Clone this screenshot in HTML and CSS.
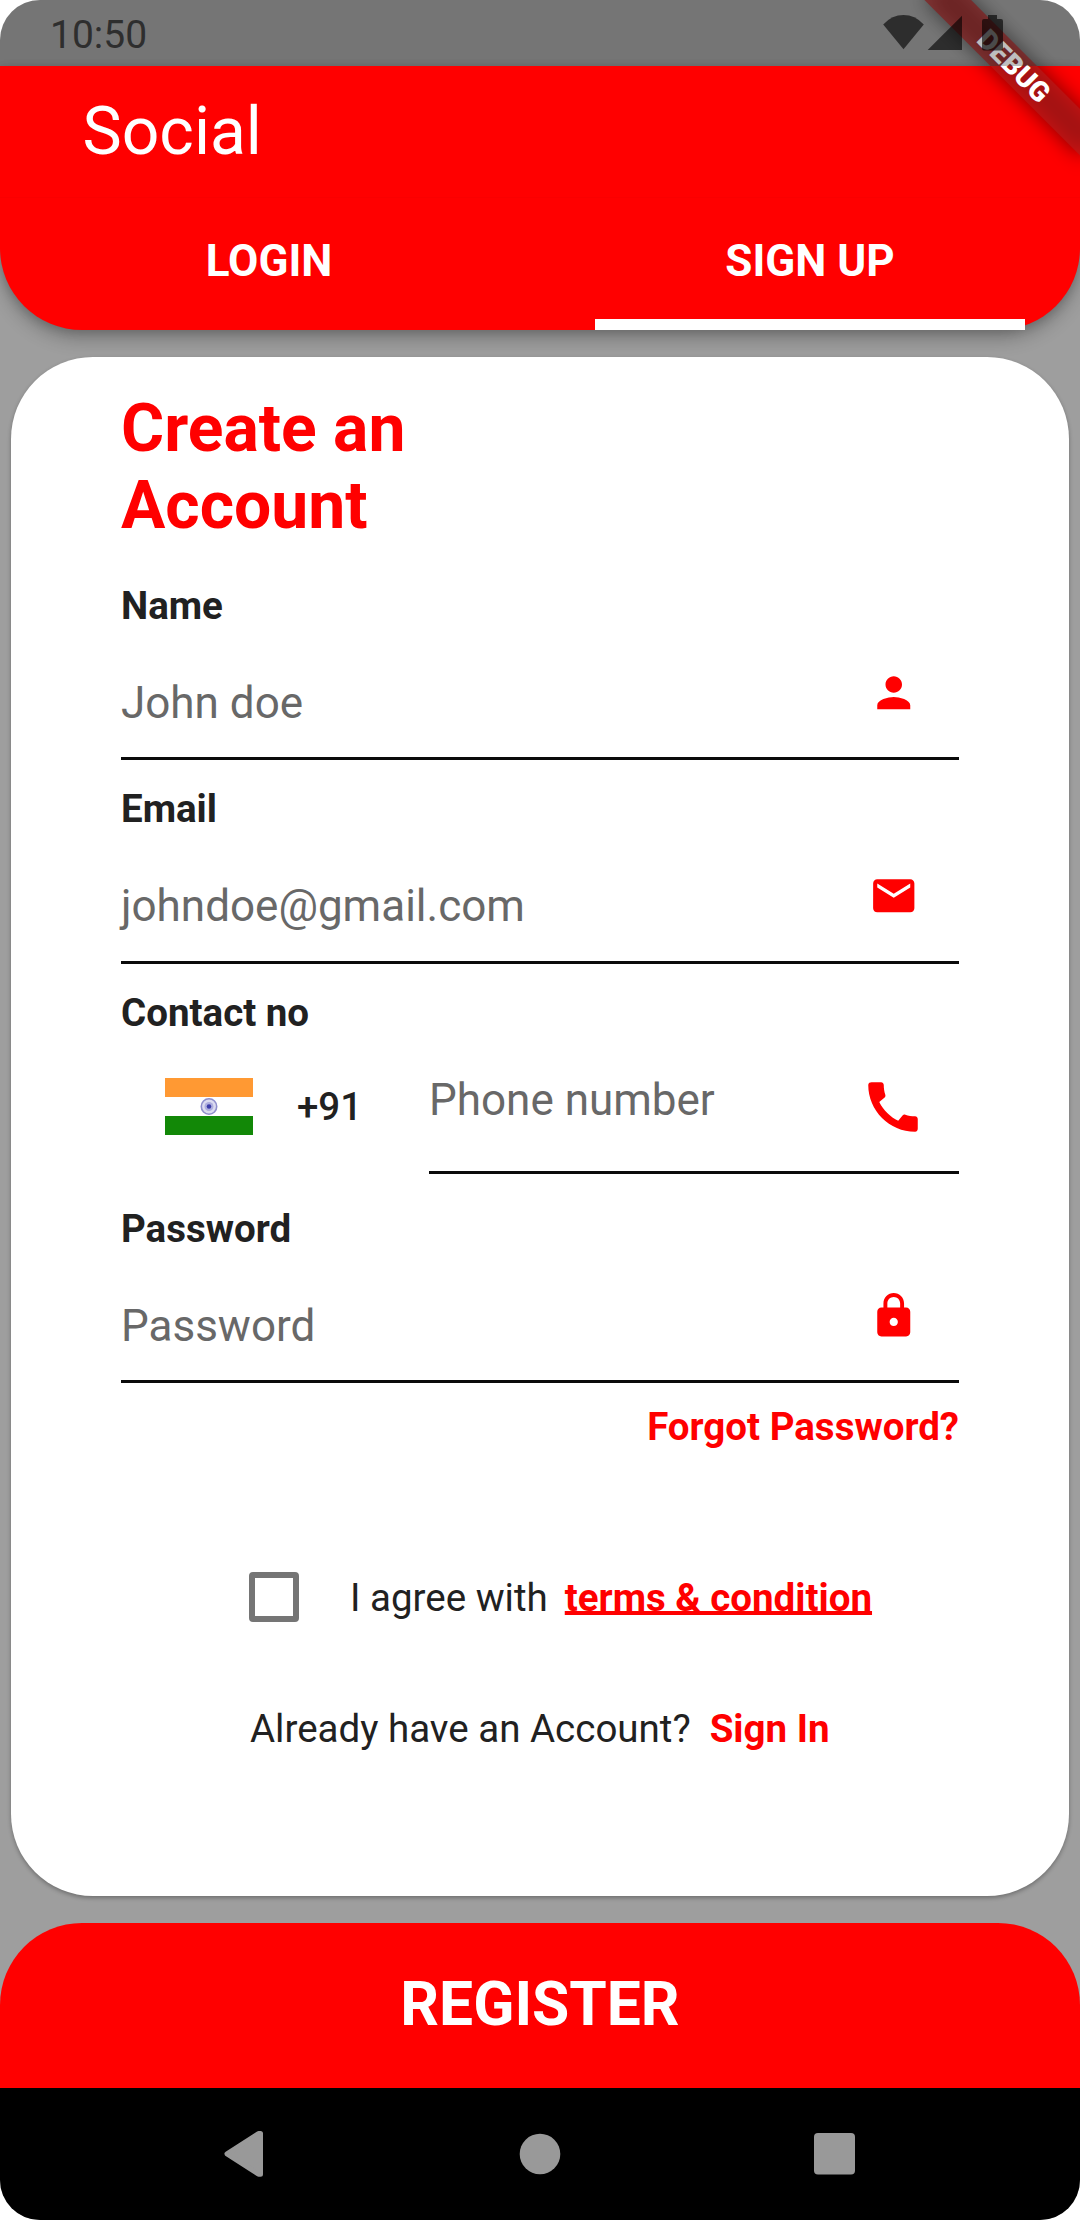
FILE: index.html
```html
<!DOCTYPE html>
<html lang="en">
<head>
<meta charset="utf-8">
<title>Social</title>
<link rel="stylesheet" href="styles.css">
</head>
<body>
<div class="screen">
  <div class="status-bar">
    <span class="clock">10:50</span>
    <svg class="status-icons" width="122" height="38" viewBox="882 14 122 38">
      <path d="M903.5 49.3 883.2 24.4Q892 15 903.5 15T923.8 24.4Z"/>
      <path d="M962 15.7V50H927.7Z"/>
      <path d="M988 15h9v4h4q2 0 2 2v27.500q0 2-2 2h-17q-2 0-2-2V21q0-2 2-2h4z"/>
    </svg>
  </div>

  <header class="header">
    <h1 class="app-title">Social</h1>
    <nav class="tabs">
      <a class="tab">LOGIN</a>
      <a class="tab tab-active">SIGN UP</a>
    </nav>
  </header>

  <main class="card">
    <h2 class="heading">Create an<br>Account</h2>

    <label class="label">Name</label>
    <div class="field">
      <span class="hint">John doe</span>
      <svg class="icon" viewBox="0 0 24 24"><path d="M12 12c2.210 0 4-1.790 4-4s-1.790-4-4-4-4 1.790-4 4 1.790 4 4 4zm0 2c-2.670 0-8 1.340-8 4v2h16v-2c0-2.660-5.330-4-8-4z"/></svg>
    </div>

    <label class="label">Email</label>
    <div class="field">
      <span class="hint">johndoe@gmail.com</span>
      <svg class="icon" viewBox="0 0 24 24"><path d="M20 4H4c-1.100 0-1.990.9-1.990 2L2 18c0 1.100.9 2 2 2h16c1.100 0 2-.9 2-2V6c0-1.100-.9-2-2-2zm0 4l-8 5-8-5V6l8 5 8-5v2z"/></svg>
    </div>

    <label class="label">Contact no</label>
    <div class="phone-row">
      <svg class="flag" width="88" height="57" viewBox="0 0 88 57">
        <rect width="88" height="57" fill="#fff"/>
        <rect width="88" height="19" fill="#ff9933"/>
        <rect y="38" width="88" height="19" fill="#128807"/>
        <circle cx="44" cy="28.500" r="7.700" fill="#dcdcf0" stroke="#8f8fcc" stroke-width="1.600"/>
        <circle cx="44" cy="28.500" r="4.500" fill="#aeaede"/>
        <circle cx="44" cy="28.500" r="2.300" fill="#3c3ca8"/>
      </svg>
      <span class="dial-code">+91</span>
      <div class="field field-phone">
        <span class="hint">Phone number</span>
        <svg class="icon icon-large" viewBox="0 0 24 24"><path d="M20.010 15.380c-1.230 0-2.420-.2-3.530-.56-.35-.12-.74-.03-1.010.24l-1.570 1.970c-2.830-1.350-5.480-3.900-6.890-6.830l1.950-1.660c.27-.28.35-.67.24-1.020-.37-1.110-.56-2.300-.56-3.530 0-.54-.45-.99-.99-.99H4.190C3.650 3 3 3.240 3 3.990 3 13.280 10.730 21 20.010 21c.71 0 .99-.63.99-1.180v-3.450c0-.54-.45-.99-.99-.99z"/></svg>
      </div>
    </div>

    <label class="label">Password</label>
    <div class="field">
      <span class="hint">Password</span>
      <svg class="icon" viewBox="0 0 24 24"><path d="M18 8h-1V6c0-2.760-2.240-5-5-5S7 3.240 7 6v2H6c-1.100 0-2 .9-2 2v10c0 1.100.9 2 2 2h12c1.100 0 2-.9 2-2V10c0-1.100-.9-2-2-2zm-6 9c-1.100 0-2-.9-2-2s.9-2 2-2 2 .9 2 2-.9 2-2 2zm3.100-9H8.900V6c0-1.710 1.390-3.100 3.100-3.100 1.710 0 3.100 1.390 3.100 3.100v2z"/></svg>
    </div>

    <a class="link forgot">Forgot Password?</a>

    <div class="agree">
      <span class="checkbox"></span>
      <span class="agree-text">I agree with</span>
      <a class="link terms">terms &amp; condition</a>
    </div>

    <div class="signin">
      <span>Already have an Account?</span>
      <a class="link">Sign In</a>
    </div>
  </main>

  <button class="register">REGISTER</button>

  <div class="nav-bar">
    <svg width="40" height="46" viewBox="0 0 40 46"><path d="M34.500 2.500 3 22.800 34.500 43.200H36.500V2.500Z" stroke="#999" stroke-width="5" stroke-linejoin="round"/></svg>
    <svg width="42" height="42" viewBox="0 0 42 42"><circle cx="22" cy="21" r="20.300"/></svg>
    <svg width="41" height="42" viewBox="0 0 41 42"><rect width="41" height="41.500" rx="4"/></svg>
  </div>

  <div class="debug-clip">
    <div class="debug-banner debug-shadow"></div>
    <div class="debug-banner debug-label">DEBUG</div>
  </div>
  <div class="status-scrim"></div>
</div>
</body>
</html>
```
FILE: styles.css
```css
* {
  box-sizing: border-box;
}

body {
  margin: 0;
  background: #fff;
  font-family: Roboto, sans-serif;
  color: #212121;
}

.screen {
  position: relative;
  display: flex;
  flex-direction: column;
  width: 1080px;
  height: 2220px;
  overflow: hidden;
  border-radius: 40px;
  background: #9e9e9e;
}

/* System status bar: its glyphs and tint sit above the debug ribbon */
.status-bar {
  position: relative;
  z-index: 5;
  display: flex;
  justify-content: space-between;
  height: 66px;
  padding: 13px 76px 0 50px;
}

.clock {
  font-size: 39px;
  line-height: 45px;
  color: #2e2e2e;
}

.status-icons {
  margin-top: 1px;
  fill: rgba(0, 0, 0, 0.61);
}

.status-scrim {
  position: absolute;
  inset: 0 0 auto;
  z-index: 4;
  height: 66px;
  background: rgba(0, 0, 0, 0.255);
}

.header {
  height: 264px;
  border-radius: 0 0 82px 82px;
  background: #f00;
  color: #fff;
  box-shadow: 0 9px 18px rgba(0, 0, 0, 0.24), 0 2px 10px rgba(0, 0, 0, 0.16);
}

.app-title {
  height: 132px;
  margin: 0;
  padding-left: 82.5px;
  border-bottom: 1px solid #fa0000;
  font-size: 66px;
  font-weight: 400;
  line-height: 131px;
}

.tabs {
  display: grid;
  grid-template-columns: 1fr 1fr;
  height: 132px;
  padding: 0 55px;
  column-gap: 110px;
}

.tab {
  padding: 5px 2px 0 0;
  border-bottom: 11px solid transparent;
  font-size: 44px;
  font-weight: 700;
  line-height: 116px;
  text-align: center;
}

.tab-active {
  padding-right: 0;
  border-color: #fff;
}

.card {
  display: flex;
  flex-direction: column;
  height: 1539px;
  margin: 27px 11px 0;
  padding: 33px 110px 0;
  border-radius: 82px;
  background: #fff;
  box-shadow: 0 2px 4px rgba(0, 0, 0, 0.3);
  font-size: 38.5px;
  line-height: 45px;
}

.heading {
  margin: 0 0 39px;
  font-size: 66px;
  font-weight: 700;
  line-height: 77px;
  color: #f00;
}

.label {
  font-weight: 700;
}

.field {
  display: flex;
  justify-content: space-between;
  align-items: flex-start;
  height: 132.4px;
  margin-bottom: 26px;
  padding: 40px 41px 0 0;
  border-bottom: 3px solid #0a0a0a;
}

.hint {
  padding-top: 9px;
  font-size: 44px;
  line-height: 52px;
  color: #686868;
}

.icon {
  width: 49.5px;
  height: 49.5px;
  fill: #f00;
}

.phone-row {
  display: flex;
  height: 139px;
  margin-bottom: 32px;
}

.flag {
  margin: 43px 0 0 44px;
}

.dial-code {
  width: 176px;
  padding: 49px 0 0 44px;
  font-weight: 500;
}

.field-phone {
  flex: 1;
  height: 139px;
  margin: 0;
  padding: 39px 33px 0 0;
}

.field-phone .hint {
  padding-top: 0;
}

.icon-large {
  width: 66px;
  height: 66px;
}

.link {
  font-weight: 700;
  color: #f00;
}

.forgot {
  align-self: flex-end;
  margin-top: -5.5px;
}

.agree {
  display: flex;
  align-items: center;
  margin: 123.5px 0 0 127.5px;
}

.checkbox {
  width: 50px;
  height: 50px;
  border: 6px solid #757575;
  border-radius: 4px;
}

.agree-text {
  margin: 0 17px 0 51.5px;
}

.terms {
  text-decoration: underline 3.5px;
  text-decoration-skip-ink: none;
  text-underline-offset: 0;
}

.signin {
  display: flex;
  gap: 19px;
  margin: 84px 0 0 129px;
}

.register {
  height: 165px;
  margin: 27px 0 0;
  padding: 0 0 2px;
  border: 0;
  border-radius: 82px 82px 0 0;
  background: #f00;
  font: 700 60.5px/163px Roboto, sans-serif;
  color: #fff;
}

.nav-bar {
  display: flex;
  justify-content: space-between;
  align-items: center;
  height: 132px;
  padding: 0 225px 0 224px;
  background: #000;
  fill: #999;
}

.nav-bar svg {
  overflow: visible;
}

/* Debug ribbon across the top right corner */
.debug-clip {
  position: absolute;
  top: 0;
  right: 0;
  z-index: 3;
  width: 220px;
  height: 220px;
  overflow: hidden;
}

.debug-banner {
  position: absolute;
  top: 77px;
  left: 110px;
  width: 220px;
  height: 33px;
  transform: rotate(45deg);
  transform-origin: 110px -77px;
}

.debug-shadow {
  background: rgba(0, 0, 0, 0.5);
  filter: blur(10px);
}

.debug-label {
  background: rgba(183, 28, 28, 0.627);
  font-size: 28px;
  font-weight: 900;
  line-height: 33px;
  text-align: center;
  color: #fff;
}
```
